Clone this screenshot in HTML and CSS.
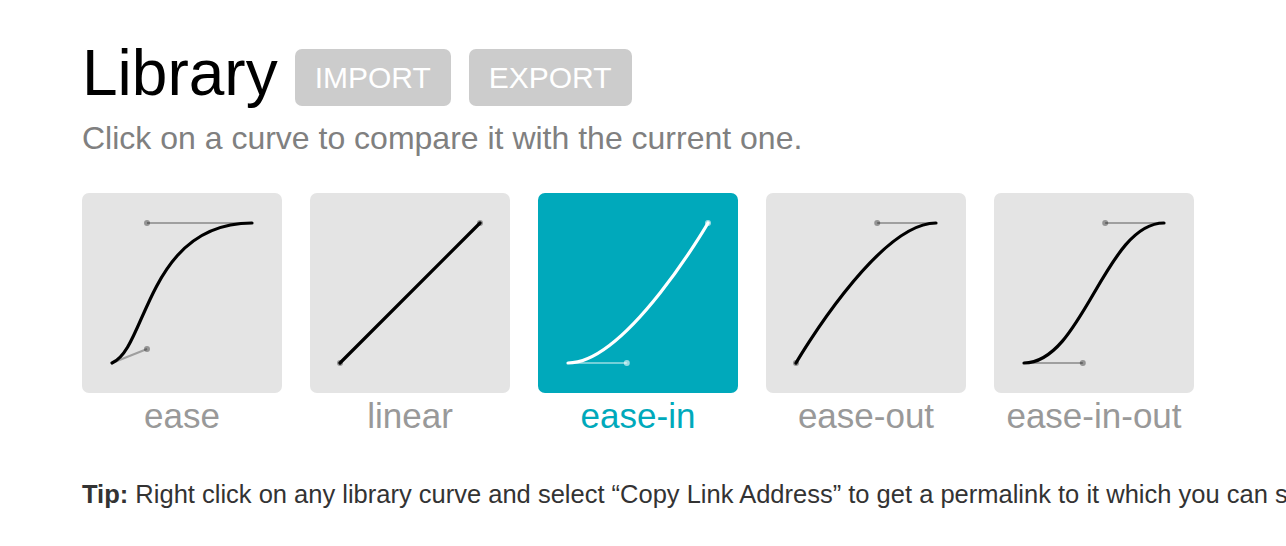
FILE: index.html
```html
<!DOCTYPE html>
<html>
<head>
<meta charset="utf-8">
<title>Library</title>
<link rel="stylesheet" href="styles.css">
</head>
<body>
<section class="library">
  <header class="lib-header">
    <h1 class="lib-title">Library</h1>
    <button class="lib-btn import">IMPORT</button>
    <button class="lib-btn export">EXPORT</button>
  </header>
  <p class="lib-sub">Click on a curve to compare it with the current one.</p>

  <div class="curves">
    <a class="curve" href="#ease">
      <span class="thumb">
        <svg viewBox="0 0 200 200" width="200" height="200">
          <g class="handles">
            <line x1="30" y1="170" x2="65" y2="156"/>
            <line x1="170" y1="30" x2="65" y2="30"/>
            <circle cx="65" cy="156" r="3"/>
            <circle cx="65" cy="30" r="3"/>
          </g>
          <path class="path" d="M30,170 C65,156 65,30 170,30"/>
        </svg>
      </span>
      <span class="name">ease</span>
    </a>
    <a class="curve" href="#linear">
      <span class="thumb">
        <svg viewBox="0 0 200 200" width="200" height="200">
          <g class="handles">
            <circle cx="30" cy="170" r="3"/>
            <circle cx="170" cy="30" r="3"/>
          </g>
          <path class="path" d="M30,170 L170,30"/>
        </svg>
      </span>
      <span class="name">linear</span>
    </a>
    <a class="curve active" href="#ease-in">
      <span class="thumb">
        <svg viewBox="0 0 200 200" width="200" height="200">
          <g class="handles">
            <line x1="30" y1="170" x2="88.8" y2="170"/>
            <circle cx="88.8" cy="170" r="3"/>
            <circle cx="170" cy="30" r="3"/>
          </g>
          <path class="path" d="M30,170 C88.8,170 170,30 170,30"/>
        </svg>
      </span>
      <span class="name">ease-in</span>
    </a>
    <a class="curve" href="#ease-out">
      <span class="thumb">
        <svg viewBox="0 0 200 200" width="200" height="200">
          <g class="handles">
            <line x1="170" y1="30" x2="111.2" y2="30"/>
            <circle cx="30" cy="170" r="3"/>
            <circle cx="111.2" cy="30" r="3"/>
          </g>
          <path class="path" d="M30,170 C30,170 111.2,30 170,30"/>
        </svg>
      </span>
      <span class="name">ease-out</span>
    </a>
    <a class="curve" href="#ease-in-out">
      <span class="thumb">
        <svg viewBox="0 0 200 200" width="200" height="200">
          <g class="handles">
            <line x1="30" y1="170" x2="88.8" y2="170"/>
            <line x1="170" y1="30" x2="111.2" y2="30"/>
            <circle cx="88.8" cy="170" r="3"/>
            <circle cx="111.2" cy="30" r="3"/>
          </g>
          <path class="path" d="M30,170 C88.8,170 111.2,30 170,30"/>
        </svg>
      </span>
      <span class="name">ease-in-out</span>
    </a>
  </div>

  <p class="tip"><strong>Tip:</strong> Right click on any library curve and select “Copy Link Address” to get a permalink to it which you can share with others.</p>
</section>
</body>
</html>
```
FILE: styles.css
```css
html, body {
  margin: 0;
  padding: 0;
  background: #fff;
  overflow: hidden;
}

body {
  font-family: "Liberation Sans", Arial, sans-serif;
  color: #000;
}

.library {
  padding: 41px 0 0 82px;
}

.lib-header {
  display: flex;
  align-items: flex-start;
}

.lib-title {
  margin: 0;
  font-size: 64px;
  line-height: 64px;
  font-weight: normal;
  color: #000;
}

.lib-btn {
  margin: 8px 0 0 18px;
  padding: 0 20px;
  height: 57px;
  border: 0;
  border-radius: 7px;
  background: #cccccc;
  color: #fff;
  font-family: "Liberation Sans", Arial, sans-serif;
  font-size: 30px;
  line-height: 57px;
}

.lib-btn.import {
  margin-left: 17px;
}

.lib-sub {
  margin: 14px 0 0;
  font-size: 32px;
  line-height: 37px;
  color: #808080;
}

.curves {
  display: flex;
  gap: 28px;
  margin-top: 36px;
}

.curve {
  display: flex;
  flex-direction: column;
  align-items: center;
  width: 200px;
  text-decoration: none;
}

.thumb {
  display: block;
  width: 200px;
  height: 200px;
  border-radius: 7px;
  background: #e4e4e4;
}

.thumb svg {
  display: block;
}

.path {
  fill: none;
  stroke: #000;
  stroke-width: 3.2;
  stroke-linecap: round;
}

.handles line {
  stroke: rgba(0, 0, 0, 0.3);
  stroke-width: 2;
}

.handles circle {
  fill: rgba(0, 0, 0, 0.35);
}

.name {
  margin-top: 3px;
  font-size: 35px;
  line-height: 40px;
  color: #999;
  white-space: nowrap;
}

.curve.active .thumb {
  background: #00a9bb;
}

.curve.active .path {
  stroke: #fff;
}

.curve.active .handles line {
  stroke: rgba(255, 255, 255, 0.45);
}

.curve.active .handles circle {
  fill: rgba(255, 255, 255, 0.6);
}

.curve.active .name {
  color: #00a9bb;
}

.tip {
  margin: 44px 0 0;
  font-size: 25.5px;
  line-height: 29px;
  color: #333;
  white-space: nowrap;
}

.tip strong {
  font-weight: bold;
  color: #333;
}
```
